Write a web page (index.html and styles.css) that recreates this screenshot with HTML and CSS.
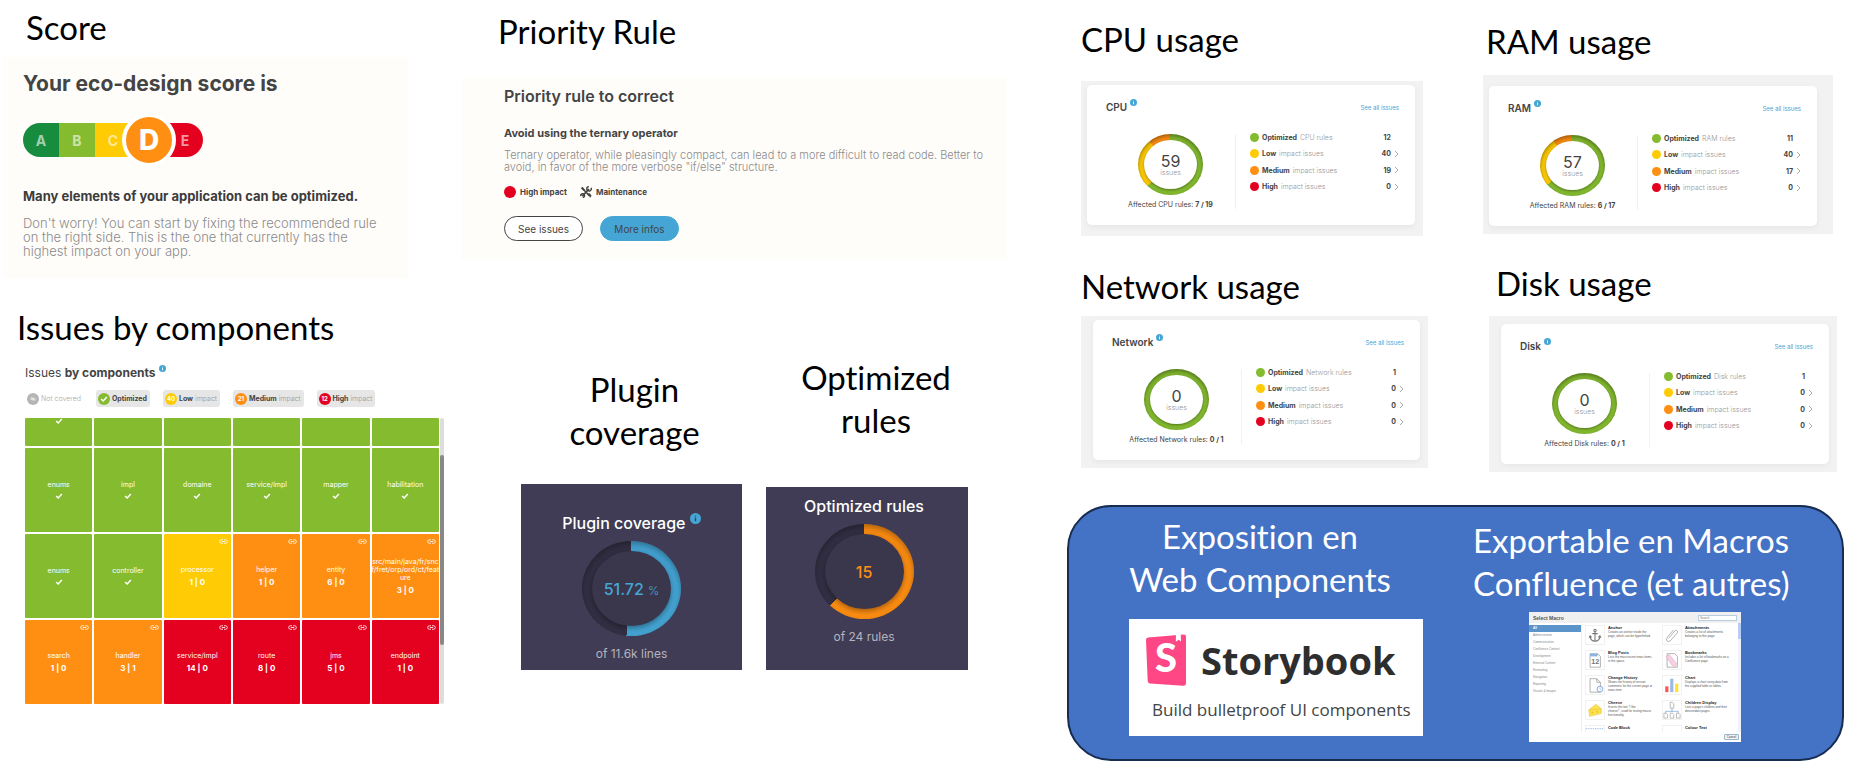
FILE: index.html
```html
<!DOCTYPE html>
<html lang="en">
<head>
<meta charset="utf-8">
<title>Eco-design dashboard components</title>
<link rel="stylesheet" href="styles.css">
</head>
<body>
<svg class="sprite" aria-hidden="true">
  <symbol id="info" viewBox="0 0 12 12"><circle cx="6" cy="6" r="6" fill="#45a6d6"/><path d="M6 5.2V9M6 3v1.2" stroke="currentColor" stroke-width="1.5"/></symbol>
  <symbol id="check" viewBox="0 0 10 8"><path d="M1.2 4l2.7 2.6L8.8 1.4" fill="none" stroke="currentColor" stroke-width="2"/></symbol>
  <symbol id="link" viewBox="0 0 18 10"><path d="M8 1.5H4.800a3.500 3.500 0 0 0 0 7H8M10 1.500h3.200a3.500 3.500 0 0 1 0 7H10M5.500 5h7" fill="none" stroke="currentColor" stroke-width="1.600"/></symbol>
  <symbol id="chevron" viewBox="0 0 5 8"><path d="M1 1l3 3-3 3" fill="none" stroke="currentColor" stroke-width="1"/></symbol>
</svg>

<main class="board">
  <div class="col col-left">
    <section>
      <h2 class="label label-score">Score</h2>
      <div class="score-card">
        <h3 class="score-title">Your eco-design score is</h3>
        <ol class="scale">
          <li class="grade grade-a">A</li><li class="grade grade-b">B</li><li class="grade grade-c">C</li><li class="grade grade-d"><span class="grade-current">D</span></li><li class="grade grade-e">E</li>
        </ol>
        <p class="score-lead">Many elements of your application can be optimized.</p>
        <p class="score-text">Don't worry! You can start by fixing the recommended rule<br>on the right side. This is the one that currently has the<br>highest impact on your app.</p>
      </div>
    </section>

    <section class="components">
      <h2 class="label label-issues">Issues by components</h2>
      <h3 class="components-title">Issues <b>by components</b> <svg class="info"><use href="#info"/></svg></h3>
      <ul class="chips">
        <li class="chip chip-off"><span class="bubble gray"><svg viewBox="0 0 12 12"><path d="M1 6q5-5 10 0q-5 5-10 0M2 2l8 8" fill="none" stroke="#fff"/><circle cx="6" cy="6" r="1.500" fill="#fff"/></svg></span>Not covered</li>
        <li class="chip"><span class="bubble green"><svg class="check"><use href="#check"/></svg></span><b>Optimized</b></li>
        <li class="chip"><span class="bubble yellow">40</span><b>Low</b> impact</li>
        <li class="chip"><span class="bubble orange">21</span><b>Medium</b> impact</li>
        <li class="chip"><span class="bubble red">12</span><b>High</b> impact</li>
      </ul>
      <div class="map">
        <ul class="tiles">
          <li class="tile tile-cut green"><svg class="check"><use href="#check"/></svg></li>
          <li class="tile tile-cut green"></li>
          <li class="tile tile-cut green"></li>
          <li class="tile tile-cut green"></li>
          <li class="tile tile-cut green"></li>
          <li class="tile tile-cut green"></li>

          <li class="tile green">enums<svg class="check"><use href="#check"/></svg></li>
          <li class="tile green">impl<svg class="check"><use href="#check"/></svg></li>
          <li class="tile green">domaine<svg class="check"><use href="#check"/></svg></li>
          <li class="tile green">service/impl<svg class="check"><use href="#check"/></svg></li>
          <li class="tile green">mapper<svg class="check"><use href="#check"/></svg></li>
          <li class="tile green">habilitation<svg class="check"><use href="#check"/></svg></li>

          <li class="tile green">enums<svg class="check"><use href="#check"/></svg></li>
          <li class="tile green">controller<svg class="check"><use href="#check"/></svg></li>
          <li class="tile yellow"><svg class="link"><use href="#link"/></svg>processor<b>1 | 0</b></li>
          <li class="tile orange"><svg class="link"><use href="#link"/></svg>helper<b>1 | 0</b></li>
          <li class="tile orange"><svg class="link"><use href="#link"/></svg>entity<b>6 | 0</b></li>
          <li class="tile orange"><svg class="link"><use href="#link"/></svg><span>src/main/java/fr/snc<br>f/fret/orp/ord/ct/feat<br>ure</span><b>3 | 0</b></li>

          <li class="tile orange"><svg class="link"><use href="#link"/></svg>search<b>1 | 0</b></li>
          <li class="tile orange"><svg class="link"><use href="#link"/></svg>handler<b>3 | 1</b></li>
          <li class="tile red"><svg class="link"><use href="#link"/></svg>service/impl<b>14 | 0</b></li>
          <li class="tile red"><svg class="link"><use href="#link"/></svg>route<b>8 | 0</b></li>
          <li class="tile red"><svg class="link"><use href="#link"/></svg>jms<b>5 | 0</b></li>
          <li class="tile red"><svg class="link"><use href="#link"/></svg>endpoint<b>1 | 0</b></li>
        </ul>
        <div class="track"><div class="thumb"></div></div>
      </div>
    </section>
  </div>

  <div class="col col-mid">
    <section>
      <h2 class="label label-rule">Priority Rule</h2>
      <div class="rule-card">
        <h3 class="rule-title">Priority rule to correct</h3>
        <h4 class="rule-name">Avoid using the ternary operator</h4>
        <p class="rule-text">Ternary operator, while pleasingly compact, can lead to a more difficult to read code. Better to<br>avoid, in favor of the more verbose "if/else" structure.</p>
        <div class="tags">
          <span class="tag"><i class="dot dot-lg red"></i>High impact</span>
          <span class="tag"><svg class="tools" viewBox="0 0 16 16"><path d="M3 13.500L12 4M4 4l8.500 9" stroke="#444" stroke-width="2.200" fill="none"/><path d="M1 3l2.500-2L7 5.500 5 6.500zM10 10l3-.5 2.500 3.500-2 2.500z" fill="#444"/><path d="M14.800 2.500a3 3 0 1 1-3-1.800M1.200 13.500a2.500 2.500 0 1 1 2.500 1.700" stroke="#444" stroke-width="2" fill="none"/></svg>Maintenance</span>
        </div>
        <div class="actions">
          <button class="btn" type="button">See issues</button>
          <button class="btn btn-fill" type="button">More infos</button>
        </div>
      </div>
    </section>
    <div class="gauges">
      <section class="gauge-plugin">
        <h2 class="label label-center">Plugin<br>coverage</h2>
        <div class="gauge gauge-tall">
          <h3 class="gauge-title">Plugin coverage <svg class="info info-dark"><use href="#info"/></svg></h3>
          <div class="ring ring-dark" style="background:conic-gradient(#45a6d6 51.72%,#343045 0)"><div class="hole blue-text"><span>51.72 <small>%</small></span></div></div>
          <p class="gauge-note">of 11.6k lines</p>
        </div>
      </section>
      <section class="gauge-rules">
        <h2 class="label label-center">Optimized<br>rules</h2>
        <div class="gauge">
          <h3 class="gauge-title">Optimized rules</h3>
          <div class="ring ring-dark" style="background:conic-gradient(#ff8f12 62.5%,#343045 0)"><div class="hole orange-text">15</div></div>
          <p class="gauge-note">of 24 rules</p>
        </div>
      </section>
    </div>
  </div>

  <div class="col col-right">
    <div class="usages">
      <section class="usage usage-cpu">
        <h2 class="label">CPU usage</h2>
        <div class="frame">
          <article class="card">
            <header class="card-head"><h3>CPU <svg class="info"><use href="#info"/></svg></h3><a href="#cpu">See all issues</a></header>
            <div class="card-body">
              <div class="summary">
                <div class="ring" style="background:conic-gradient(#84bb2f 63.2%,#fecb05 0 88%,#ff8f12 0)"><div class="hole">59<small>issues</small></div></div>
                <p>Affected CPU rules: <b>7 / 19</b></p>
              </div>
              <ul class="stats">
                <li><i class="dot green"></i><span><b>Optimized</b> CPU rules</span><b>12</b></li>
                <li><i class="dot yellow"></i><span><b>Low</b> impact issues</span><b>40</b><svg class="chevron"><use href="#chevron"/></svg></li>
                <li><i class="dot orange"></i><span><b>Medium</b> impact issues</span><b>19</b><svg class="chevron"><use href="#chevron"/></svg></li>
                <li><i class="dot red"></i><span><b>High</b> impact issues</span><b>0</b><svg class="chevron"><use href="#chevron"/></svg></li>
              </ul>
            </div>
          </article>
        </div>
      </section>

      <section class="usage usage-ram">
        <h2 class="label">RAM usage</h2>
        <div class="frame">
          <article class="card">
            <header class="card-head"><h3>RAM <svg class="info"><use href="#info"/></svg></h3><a href="#ram">See all issues</a></header>
            <div class="card-body">
              <div class="summary">
                <div class="ring" style="background:conic-gradient(#84bb2f 64.7%,#fecb05 0 89.5%,#ff8f12 0)"><div class="hole">57<small>issues</small></div></div>
                <p>Affected RAM rules: <b>6 / 17</b></p>
              </div>
              <ul class="stats">
                <li><i class="dot green"></i><span><b>Optimized</b> RAM rules</span><b>11</b></li>
                <li><i class="dot yellow"></i><span><b>Low</b> impact issues</span><b>40</b><svg class="chevron"><use href="#chevron"/></svg></li>
                <li><i class="dot orange"></i><span><b>Medium</b> impact issues</span><b>17</b><svg class="chevron"><use href="#chevron"/></svg></li>
                <li><i class="dot red"></i><span><b>High</b> impact issues</span><b>0</b><svg class="chevron"><use href="#chevron"/></svg></li>
              </ul>
            </div>
          </article>
        </div>
      </section>

      <section class="usage usage-network">
        <h2 class="label">Network usage</h2>
        <div class="frame">
          <article class="card">
            <header class="card-head"><h3>Network <svg class="info"><use href="#info"/></svg></h3><a href="#network">See all issues</a></header>
            <div class="card-body">
              <div class="summary">
                <div class="ring" style="background:#84bb2f"><div class="hole">0<small>issues</small></div></div>
                <p>Affected Network rules: <b>0 / 1</b></p>
              </div>
              <ul class="stats">
                <li><i class="dot green"></i><span><b>Optimized</b> Network rules</span><b>1</b></li>
                <li><i class="dot yellow"></i><span><b>Low</b> impact issues</span><b>0</b><svg class="chevron"><use href="#chevron"/></svg></li>
                <li><i class="dot orange"></i><span><b>Medium</b> impact issues</span><b>0</b><svg class="chevron"><use href="#chevron"/></svg></li>
                <li><i class="dot red"></i><span><b>High</b> impact issues</span><b>0</b><svg class="chevron"><use href="#chevron"/></svg></li>
              </ul>
            </div>
          </article>
        </div>
      </section>

      <section class="usage usage-disk">
        <h2 class="label">Disk usage</h2>
        <div class="frame">
          <article class="card">
            <header class="card-head"><h3>Disk <svg class="info"><use href="#info"/></svg></h3><a href="#disk">See all issues</a></header>
            <div class="card-body">
              <div class="summary">
                <div class="ring" style="background:#84bb2f"><div class="hole">0<small>issues</small></div></div>
                <p>Affected Disk rules: <b>0 / 1</b></p>
              </div>
              <ul class="stats">
                <li><i class="dot green"></i><span><b>Optimized</b> Disk rules</span><b>1</b></li>
                <li><i class="dot yellow"></i><span><b>Low</b> impact issues</span><b>0</b><svg class="chevron"><use href="#chevron"/></svg></li>
                <li><i class="dot orange"></i><span><b>Medium</b> impact issues</span><b>0</b><svg class="chevron"><use href="#chevron"/></svg></li>
                <li><i class="dot red"></i><span><b>High</b> impact issues</span><b>0</b><svg class="chevron"><use href="#chevron"/></svg></li>
              </ul>
            </div>
          </article>
        </div>
      </section>
    </div>

    <div class="banner">
      <section class="banner-web">
        <h2 class="label label-center">Exposition en<br>Web Components</h2>
        <div class="storybook">
          <div class="storybook-brand">
            <svg class="storybook-logo" viewBox="0 0 42 52"><path d="M3 3.500L39 0.500Q41 .5 41 2.500V49.500Q41 52 38 51.800L5 49.500Q2.800 49.300 2.700 47L1 6Q1 3.700 3 3.500z" fill="#ff4785"/><path d="M31 0.800l4.800-.4.200 7.200-2.400-1.800-2.800 2z" fill="#fff"/><text x="21" y="38" text-anchor="middle" class="storybook-s">S</text></svg>
            <span class="storybook-name">Storybook</span>
          </div>
          <p class="storybook-text">Build bulletproof UI components</p>
        </div>
      </section>
      <section class="banner-macro">
        <h2 class="label">Exportable en Macros<br>Confluence (et autres)</h2>
        <div class="dialog">
          <header class="dialog-head"><b>Select Macro</b><input class="search" type="text" placeholder="Search" aria-label="Search"></header>
          <div class="dialog-main">
            <ul class="cats">
              <li class="active">All</li><li>Administration</li><li>Communication</li><li>Confluence Content</li><li>Development</li><li>External Content</li><li>Formatting</li><li>Navigation</li><li>Reporting</li><li>Visuals &amp; Images</li>
            </ul>
            <ul class="macros">
              <li><svg viewBox="0 0 20 20"><g fill="none" stroke="#777" stroke-width="1.200"><circle cx="10" cy="5" r="1.300"/><path d="M10 6.300V17M7 8.500h6M4.500 11.500q.5 5 5.500 5.500q5-.5 5.500-5.500M3.500 13l1-2 1.700 1.500M16.500 13l-1-2-1.700 1.500"/></g></svg><p><b>Anchor</b>Creates an anchor inside the<br>page, which can be hyperlinked.</p></li>
              <li><svg viewBox="0 0 20 20"><path d="M6 14l7-8.500q2-1.500 3 0 .8 1-.5 2.600l-7 8q-2.500 2-4 .5-1.500-1.800.3-4L11.500 4.500" fill="none" stroke="#999" stroke-width=".8"/></svg><p><b>Attachments</b>Creates a list of attachments<br>belonging to this page.</p></li>
              <li><svg viewBox="0 0 20 20"><path d="M4.500 3H13l3 3v12H4.500z" fill="#fff" stroke="#888" stroke-width=".7"/><path d="M4.500 3H13v3H4.500z" fill="#8fb4e3"/><text x="10.300" y="14.500" text-anchor="middle" class="day">12</text></svg><p><b>Blog Posts</b>Lists the most recent news items<br>in the space.</p></li>
              <li><svg viewBox="0 0 20 20"><path d="M4.500 3H13l3 3v12H4.500z" fill="#fff" stroke="#888" stroke-width=".7"/><path d="M3.500 6.500L7 4l8 10-1 3-3.500-.5z" fill="#f7cfe6" stroke="#d9a" stroke-width=".5"/></svg><p><b>Bookmarks</b>Includes a list of bookmarks on a<br>Confluence page.</p></li>
              <li><svg viewBox="0 0 20 20"><path d="M4.500 3H12l4 4v11H4.500zM12 3v4h4" fill="#fff" stroke="#888" stroke-width=".7"/><circle cx="15.500" cy="14.500" r="3.200" fill="#fff" stroke="#6b9bd4" stroke-width=".9"/><path d="M15.500 12.500v2l1.500.8" fill="none" stroke="#6b9bd4" stroke-width=".6"/></svg><p><b>Change History</b>Shows the history of version<br>comments for the current page or<br>news item.</p></li>
              <li><svg viewBox="0 0 20 20"><path d="M2.500 11.500h3.500V18H2.500z" fill="#ff5252"/><path d="M8 3h3.500v15H8z" fill="#9db8e2"/><path d="M13.500 8.500H17V18h-3.500z" fill="#ffe135"/></svg><p><b>Chart</b>Displays a chart using data from<br>the supplied table or tables.</p></li>
              <li><svg viewBox="0 0 20 20"><path d="M3 10l8-6.500 6 5V14L4 17z" fill="#fde24f" stroke="#e0b52e" stroke-width=".5"/><path d="M3 10l14-1.500" stroke="#e0b52e" stroke-width=".5"/><circle cx="7" cy="13" r="1.200" fill="#efc535"/><circle cx="12.500" cy="12" r="1.200" fill="#efc535"/></svg><p><b>Cheese</b>Inserts the text "I like<br>cheese!", used for testing macro<br>functionality.</p></li>
              <li><svg viewBox="0 0 20 20"><path d="M10 8v4M3 14v-2.500h14V14" fill="none" stroke="#6b9bd4" stroke-width=".7"/><path d="M8 1.500h2.500L12 3v5H8zM1 13.500h2.500L5 15v4H1zM8 13.500h2.500L12 15v4H8zM15 13.500h2.500L19 15v4h-4z" fill="#fff" stroke="#888" stroke-width=".6"/></svg><p><b>Children Display</b>Lists a page's children and their<br>descendant pages.</p></li>
              <li><svg viewBox="0 0 20 20"><path d="M0 3h20" stroke="#8fb4e3" stroke-width="1" stroke-dasharray="1.500 1"/></svg><p><b>Code Block</b></p></li>
              <li><svg viewBox="0 0 20 20"></svg><p><b>Colour Text</b></p></li>
            </ul>
            <div class="dialog-scroll"><i></i></div>
          </div>
          <footer class="dialog-foot"><button type="button">Cancel</button></footer>
        </div>
      </section>
    </div>
  </div>
</main>
</body>
</html>
```

FILE: styles.css
```css
* { box-sizing: border-box; }
body, h2, h3, h4, p, ul, ol { margin: 0; padding: 0; }
ul, ol { list-style: none; }
body { background: #fff; color: #444; font-family: Inter, sans-serif; }
svg { display: block; }
.sprite { position: absolute; width: 0; height: 0; }

.green { background: #84bb2f; }
.yellow { background: #fecb05; }
.orange { background: #ff8f12; }
.red { background: #e4001f; }
.gray { background: #b5b5b5; }

.board { display: grid; grid-template-columns: minmax(0, 460fr) minmax(0, 607fr) minmax(0, 785fr); align-items: start; }
.label { color: #000; font: 400 33px/43px Lato, sans-serif; font-variant-ligatures: none; white-space: nowrap; }
.label-center { text-align: center; }

.info { display: inline-block; width: 7px; height: 7px; color: #fff; vertical-align: 5px; }
.check { width: 8px; height: 6px; color: #fff; }
.dot { width: 9px; height: 9px; border-radius: 50%; }
.dot-lg { width: 12px; height: 12px; }

/* Score */
.col-left { padding: 6px 16px 0 3px; }
.label-score { padding-left: 23px; }
.score-card { margin: 8px 36px 0 0; padding: 16px 20px 20px 20px; background: #fffdfa; }
.score-title { font-size: 21px; line-height: 22px; font-weight: 700; }
.scale { display: flex; align-items: center; height: 54px; margin-top: 18px; }
.grade { display: flex; align-items: center; justify-content: center; width: 36px; height: 34px; color: #ffffff99; font-size: 14px; font-weight: 700; }
.grade-a { background: #188c3e; border-radius: 17px 0 0 17px; }
.grade-b { background: #84bb2f; }
.grade-c { background: #fecb05; }
.grade-d { background: linear-gradient(90deg, #fecb05 50%, #e4001f 50%); }
.grade-e { background: #e4001f; border-radius: 0 17px 17px 0; }
.grade-current { display: grid; flex: none; place-items: center; width: 54px; height: 54px; border: 4px solid #fff; border-radius: 50%; background: #ff8f12; color: #fff; font-size: 28px; font-weight: 800; z-index: 1; }
.score-lead { margin-top: 21px; color: #3c3c3c; font-size: 13px; line-height: 16px; font-weight: 700; white-space: nowrap; }
.score-text { margin-top: 12px; color: #8b8b8b; font-size: 13px; line-height: 14px; font-weight: 300; white-space: nowrap; }

/* Issues by components */
.components { margin-top: 28px; padding-left: 14px; }
.components-title, .chips, .map { margin-left: 8px; }
.components-title { margin-top: 15px; font-size: 12px; line-height: 18px; font-weight: 400; }
.chips { display: flex; gap: 13px; margin-top: 8px; }
.chip { display: flex; align-items: center; gap: 2px; height: 17px; padding: 0 3px 0 2px; border-radius: 3px; background: #e6e6e6; color: #999; font-size: 7px; font-weight: 300; white-space: nowrap; }
.chip-off { padding-right: 2px; background: none; color: #aaa; }
.chip b { color: #444; font-weight: 700; }
.bubble { display: grid; place-items: center; width: 12px; height: 12px; border-radius: 50%; color: #fff; font-size: 6px; font-weight: 700; }
.bubble svg { width: 8px; height: 6px; }
.map { display: grid; grid-template-columns: 1fr 4px; gap: 1px; margin-top: 11px; }
.tiles { display: grid; grid-template-columns: repeat(6, 1fr); grid-template-rows: 28px; grid-auto-rows: 84px; gap: 2px; }
.tile { position: relative; display: flex; flex-direction: column; align-items: center; justify-content: center; gap: 4px; min-width: 0; border-radius: 1px; color: #fff; font-size: 7px; line-height: 8px; text-align: center; white-space: nowrap; }
.tile b { font-size: 8px; }
.tile-cut { justify-content: flex-start; }
.tile .link { position: absolute; top: 5px; right: 3px; width: 9px; height: 5px; }
.track { padding-top: 37px; border-radius: 2px; background: #ddd; }
.thumb { height: 190px; border-radius: 2px; background: #888; }

/* Priority rule */
.col-mid { padding-top: 10px; }
.label-rule { padding-left: 38px; }
.rule-card { margin: 25px 60px 0 1px; padding: 9px 30px 18px 43px; background: #fffdfa; }
.rule-title { font-size: 16px; line-height: 18px; font-weight: 600; }
.rule-name { margin-top: 21px; font-size: 11px; line-height: 14px; font-weight: 700; }
.rule-text { margin-top: 9px; color: #8b8b8b; font-size: 11px; line-height: 12px; font-weight: 300; white-space: nowrap; }
.tags { display: flex; gap: 13px; margin-top: 13px; }
.tag { display: flex; align-items: center; gap: 4px; font-size: 8px; line-height: 12px; font-weight: 700; }
.tools { width: 12px; height: 12px; }
.actions { display: flex; gap: 17px; margin-top: 18px; }
.btn { width: 79px; height: 25px; padding: 0; border: 1px solid #444; border-radius: 13px; background: #fff; color: #444; font: 400 10px/12px Inter, sans-serif; }
.btn-fill { border-color: #45a6d6; background: #45a6d6; }

/* Gauges */
.gauges { display: grid; grid-template-columns: minmax(0, 221fr) minmax(0, 202fr); align-items: start; gap: 24px; margin-top: 97px; padding: 0 99px 0 61px; }
.gauge-plugin { padding-top: 12px; }
.gauge-plugin .label { padding-left: 6px; }
.gauge-rules .label { padding-left: 18px; }
.gauge { margin-top: 45px; padding: 9px 6px 25px 0; background: #403c55; }
.gauge-tall { margin-top: 30px; padding: 29px 0 8px; }
.gauge-title { color: #fff; font-size: 16px; line-height: 20px; font-weight: 500; text-align: center; }
.info-dark { width: 11px; height: 11px; color: #403c55; }
.ring { display: grid; width: 65px; height: 62px; padding: 6px; border-radius: 50%; box-shadow: inset 0 2px 4px #00000066; }
.hole { display: flex; flex-direction: column; align-items: center; justify-content: center; border-radius: 50%; background: #fff; box-shadow: 0 1px 3px #00000066; color: #444; font-size: 16px; line-height: 16px; }
.hole small { color: #999; font-size: 7px; line-height: 8px; font-weight: 300; }
.ring-dark { width: 99px; height: 95px; margin: 8px auto 0; padding: 10px; box-shadow: inset 0 3px 6px #00000055; }
.ring-dark .hole { background: #3a364c; font-size: 16px; font-weight: 500; box-shadow: 0 2px 6px #00000066; }
.ring-dark .hole small { color: inherit; font-size: 12px; }
.blue-text.hole { color: #45a6d6; }
.orange-text.hole { color: #ff8f12; }
.gauge-note { margin-top: 10px; color: #b5b3bd; font-size: 12px; line-height: 16px; text-align: center; }

/* Usage cards */
.usages { display: grid; grid-template-columns: minmax(0, 393fr) minmax(0, 392fr); align-items: start; padding-top: 18px; }
.usage-cpu { padding: 0 37px 0 14px; }
.usage-ram { padding: 2px 19px 0 23px; }
.usage-network { padding: 29px 32px 0 14px; }
.usage-disk { padding: 26px 15px 0 29px; }
.usage-ram .label { padding-left: 3px; }
.usage-disk .label { padding-left: 7px; }
.frame { background: #f2f2f2; }
.usage-cpu .frame { margin-top: 20px; padding: 4px 8px 11px 6px; }
.usage-ram .frame { margin-top: 12px; padding: 11px 16px 8px 6px; }
.usage-network .frame { margin-top: 8px; padding: 4px 8px 8px 12px; }
.usage-disk .frame { margin-top: 11px; padding: 8px 8px 8px 12px; }
.card { height: 140px; padding: 14px 16px 0 19px; border-radius: 5px; background: #fff; box-shadow: 0 2px 6px #0000000d; }
.card-head { display: flex; align-items: center; justify-content: space-between; height: 16px; }
.card-head h3 { font-size: 10px; line-height: 16px; font-weight: 600; }
.card-head a { color: #45a6d6; font-size: 6px; text-decoration: none; }
.card-body { display: grid; grid-template-columns: 130px 1fr; margin-top: 19px; }
.summary { display: flex; flex-direction: column; align-items: center; height: 75px; border-right: 1px solid #f1f1f1; }
.summary p { margin-top: 6px; font-size: 7px; line-height: 8px; white-space: nowrap; }
.stats { display: grid; grid-template-rows: repeat(4, 1fr); height: 66px; margin-top: -5px; padding-left: 14px; color: #999; font-size: 7px; font-weight: 300; }
.stats li { display: grid; grid-template-columns: 9px 1fr auto 5px; align-items: center; column-gap: 3px; }
.stats b { color: #444; font-weight: 700; }
.stats span b { margin-right: 1px; }
.chevron { width: 5px; height: 8px; color: #aaa; }

/* Banner */
.banner { display: grid; grid-template-columns: minmax(0, 391fr) minmax(0, 386fr); align-items: start; margin: 33px 8px 4px 0; border: 2px solid #172c51; border-radius: 44px; background: #4472c4; }
.banner .label { color: #fff; }
.banner-web { padding: 8px 35px 23px 60px; }
.banner-web .label { margin-right: 32px; }
.banner-macro { padding: 12px 15px 17px 15px; }
.storybook { margin-top: 18px; padding: 15px 14px 14px 16px; background: #fff; }
.storybook-brand { display: flex; align-items: center; gap: 14px; }
.storybook-logo { flex: none; width: 42px; height: 52px; }
.storybook-s { fill: #fff; font: 900 40px Lato, sans-serif; }
.storybook-name { color: #2e2e2e; font: 700 38px/52px "Open Sans", sans-serif; }
.storybook-text { margin: 12px 0 0 7px; color: #444; font: 400 17px/24px "Open Sans", sans-serif; white-space: nowrap; }

/* Macro dialog */
.dialog { width: 212px; margin: 7px 0 0 56px; background: #fff; color: #555; font: 3px/4px "Liberation Sans", Arial, sans-serif; }
.dialog-head { display: flex; align-items: center; justify-content: space-between; height: 11px; padding: 0 4px; background: #f0f0f0; font-size: 5px; }
.search { width: 39px; height: 6px; padding: 0 1px; border: 1px solid #b8cde0; background: #fff; color: #777; font: 3px/4px "Liberation Sans", Arial, sans-serif; }
.dialog-main { display: grid; grid-template-columns: 53px 1fr 3px; height: 109px; overflow: hidden; }
.cats { padding-top: 2px; border-right: 1px solid #eee; color: #888; }
.cats li { padding-left: 4px; line-height: 7px; }
.cats .active { background: #5b93cb; color: #fff; font-weight: 700; }
.macros { display: grid; grid-template-columns: 77px 1fr; grid-auto-rows: 25px; padding: 2px 0 0 3px; overflow: hidden; }
.macros li { display: flex; gap: 3px; white-space: nowrap; }
.macros svg { flex: none; width: 20px; height: 20px; border: 1px solid #f1f1f1; }
.macros b { display: block; color: #222; font-size: 4px; line-height: 5px; }
.day { fill: #777; font: 700 8px "Liberation Sans", Arial, sans-serif; }
.dialog-scroll { background: #eef3fb; }
.dialog-scroll i { display: block; height: 16px; background: #b7cdf5; }
.dialog-foot { display: flex; justify-content: flex-end; align-items: center; height: 10px; padding-right: 2px; }
.dialog-foot button { width: 15px; height: 6px; padding: 0; border: 1px solid #9ab5cc; border-radius: 1px; background: #f3f3f3; color: #333; font: 3px/4px "Liberation Sans", Arial, sans-serif; }
```
